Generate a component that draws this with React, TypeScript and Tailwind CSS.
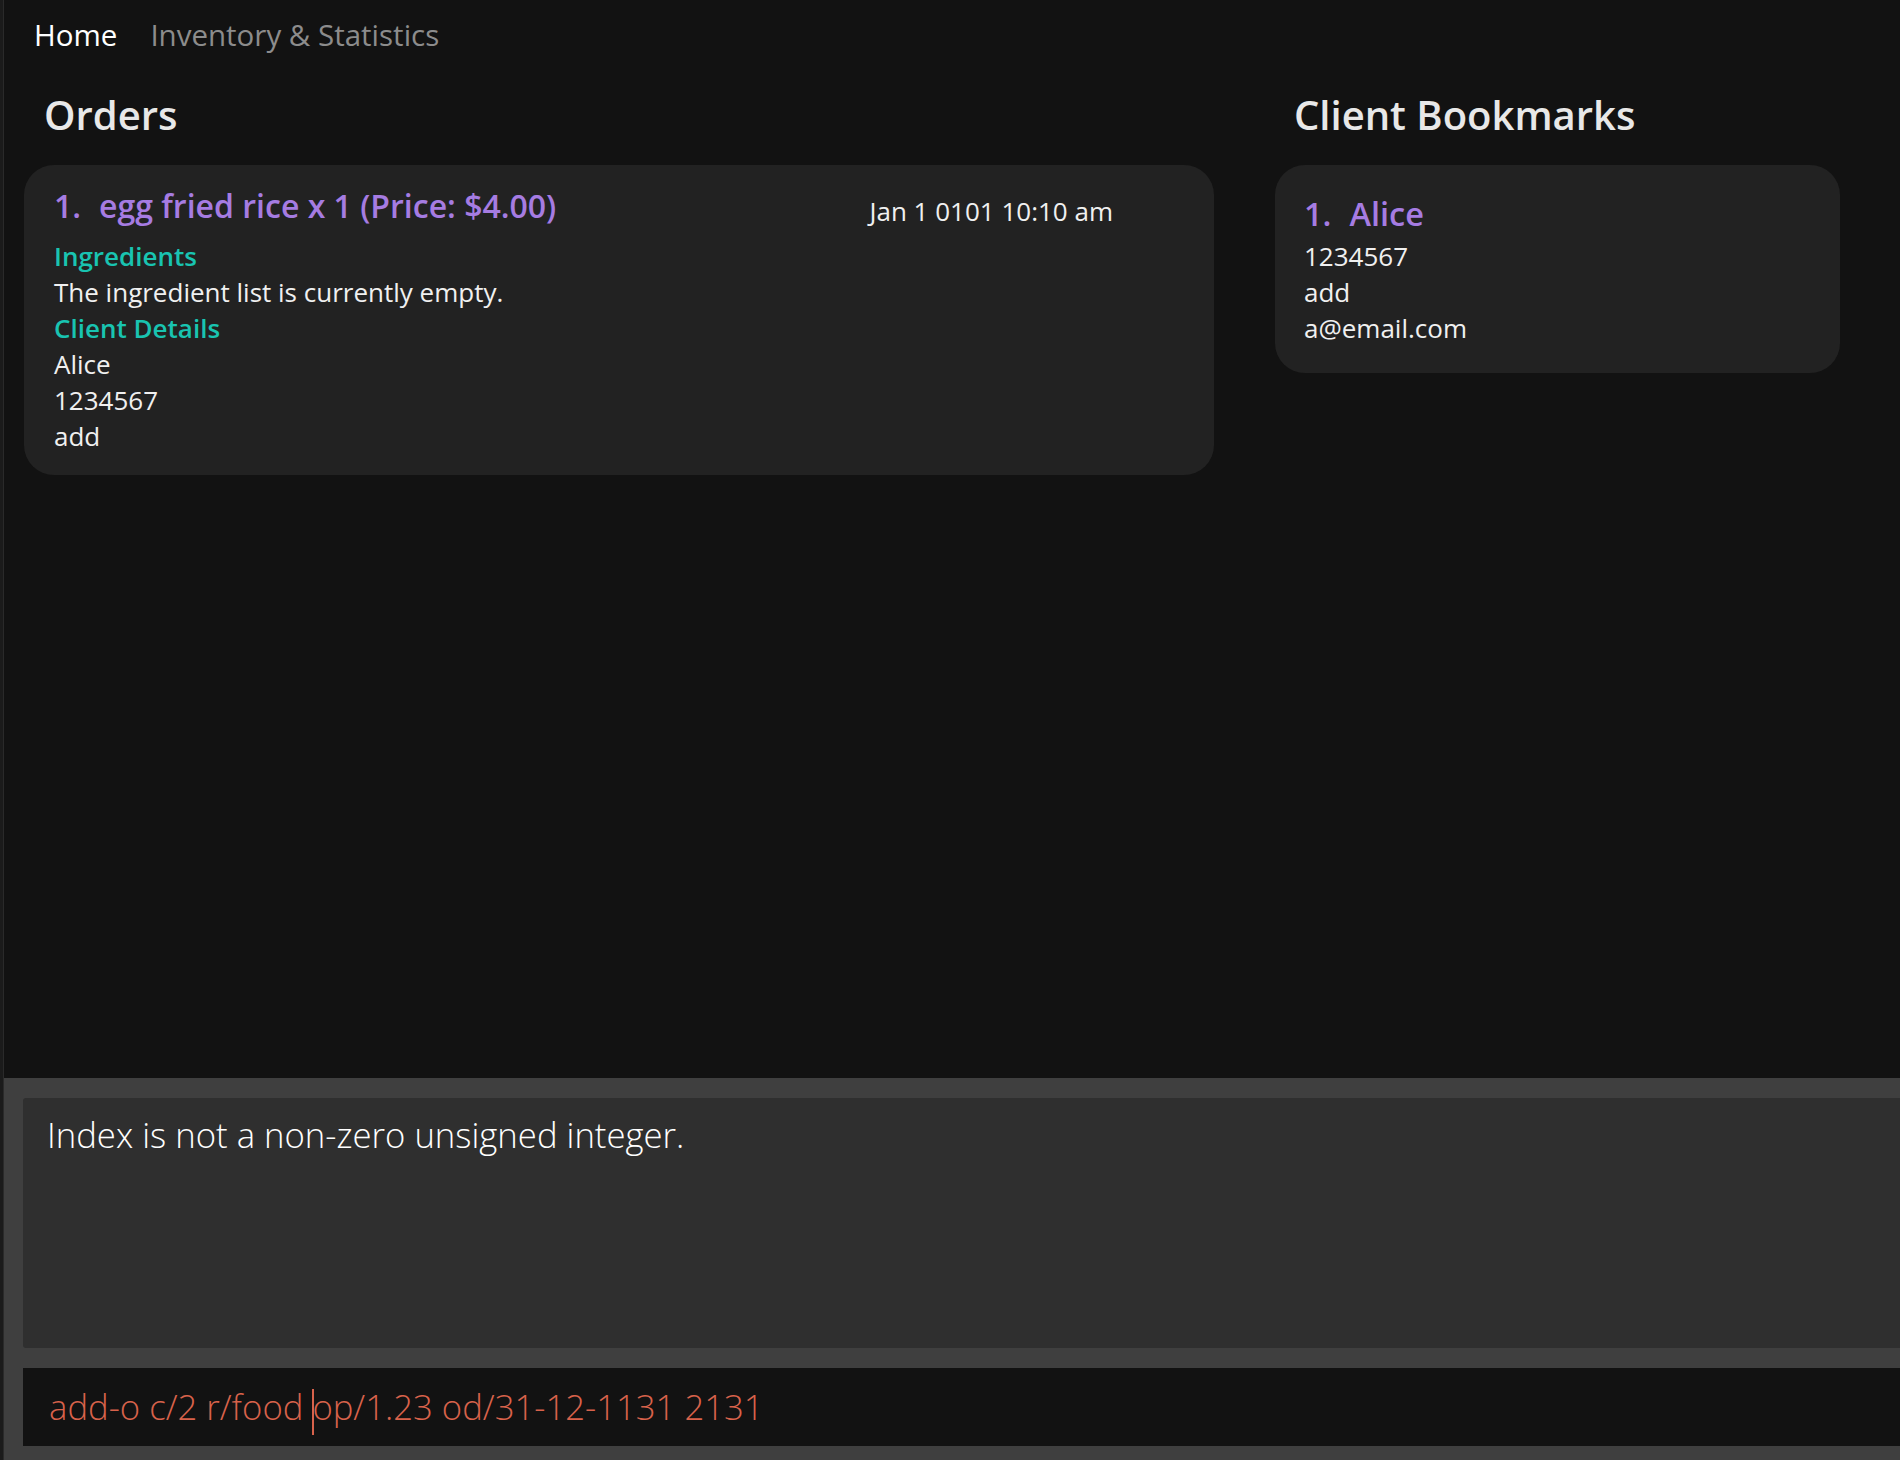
import React from "react";

const order = {
  index: 1,
  title: "egg fried rice x 1 (Price: $4.00)",
  date: "Jan 1 0101 10:10 am",
  ingredients: "The ingredient list is currently empty.",
  client: ["Alice", "1234567", "add"],
};

const bookmarks = [
  { index: 1, name: "Alice", phone: "1234567", address: "add", email: "a@email.com" },
];

export default function App() {
  return (
    <div
      className="flex h-[1460px] w-[1900px] overflow-hidden bg-[#121212] text-[#f0f0f0]"
      style={{ fontFamily: '"Open Sans", "Noto Sans", sans-serif' }}
    >
      {/* window edge */}
      <div className="w-[4px] shrink-0 border-r border-[#2a2a2a] bg-[#1b1b1b]" />

      <div className="flex min-w-0 flex-1 flex-col">
        <div className="flex h-[1078px] flex-col">
          <nav className="flex h-[53px] items-end gap-[33px] pl-[30px]">
            <span className="text-[29.5px] leading-[36px] text-white">Home</span>
            <span className="text-[29.5px] leading-[36px] text-[#8c8c8c]">
              Inventory &amp; Statistics
            </span>
          </nav>

          <div className="mt-[38px] flex pl-[20px]">
            <section className="w-[1190px]">
              <h1 className="pl-[20px] text-[40px] font-semibold leading-[48px] text-[#e8e8e8]">
                Orders
              </h1>
              <article className="mt-[26px] rounded-[30px] bg-[#222222] pb-[21px] pl-[30px] pr-[101px] pt-[21px]">
                <div className="flex items-start justify-between">
                  <h2 className="text-[32px] font-semibold leading-[40px] text-[#a67ce2]">
                    <span className="mr-[18px]">{order.index}.</span>
                    {order.title}
                  </h2>
                  <span className="mt-[5px] text-[26px] leading-[40px] text-[#f0f0f0]">
                    {order.date}
                  </span>
                </div>
                <div className="mt-[7px] text-[26px] leading-[36px]">
                  <p className="font-semibold text-[#19c4b1]">Ingredients</p>
                  <p>{order.ingredients}</p>
                  <p className="font-semibold text-[#19c4b1]">Client Details</p>
                  {order.client.map((line) => (
                    <p key={line}>{line}</p>
                  ))}
                </div>
              </article>
            </section>

            <section className="ml-[61px] w-[565px]">
              <h1 className="pl-[19px] text-[40px] font-semibold leading-[48px] text-[#e8e8e8]">
                Client Bookmarks
              </h1>
              {bookmarks.map((b) => (
                <article
                  key={b.index}
                  className="mt-[26px] rounded-[30px] bg-[#222222] pb-[27px] pl-[29px] pt-[29px]"
                >
                  <h2 className="text-[32.5px] font-semibold leading-[40px] text-[#a67ce2]">
                    <span className="mr-[18px]">{b.index}.</span>
                    {b.name}
                  </h2>
                  <div className="mt-[4px] text-[26px] leading-[36px]">
                    <p>{b.phone}</p>
                    <p>{b.address}</p>
                    <p>{b.email}</p>
                  </div>
                </article>
              ))}
            </section>
          </div>
        </div>

        <div className="flex flex-1 flex-col bg-[#3f3f3f] pb-[14px] pl-[19px] pt-[20px]">
          <div className="h-[250px] rounded-l-[3px] bg-[#2f2f2f] pl-[24px] pt-[15px]">
            <p className="text-[34.7px] font-light leading-[44px] text-white">
              Index is not a non-zero unsigned integer.
            </p>
          </div>
          <div className="mt-[20px] flex h-[78px] items-center bg-[#121212] pl-[26px]">
            <p className="whitespace-pre text-[34.7px] font-light leading-[44px] text-[#d8624b]">
              {"add-o c/2 r/food "}
              <span className="relative inline-block w-0 align-middle">
                <span className="absolute -top-[22px] left-0 h-[46px] w-[1.5px] bg-[#d8624b]" />
              </span>
              {"op/1.23 od/31-12-1131 2131"}
            </p>
          </div>
        </div>
      </div>
    </div>
  );
}
